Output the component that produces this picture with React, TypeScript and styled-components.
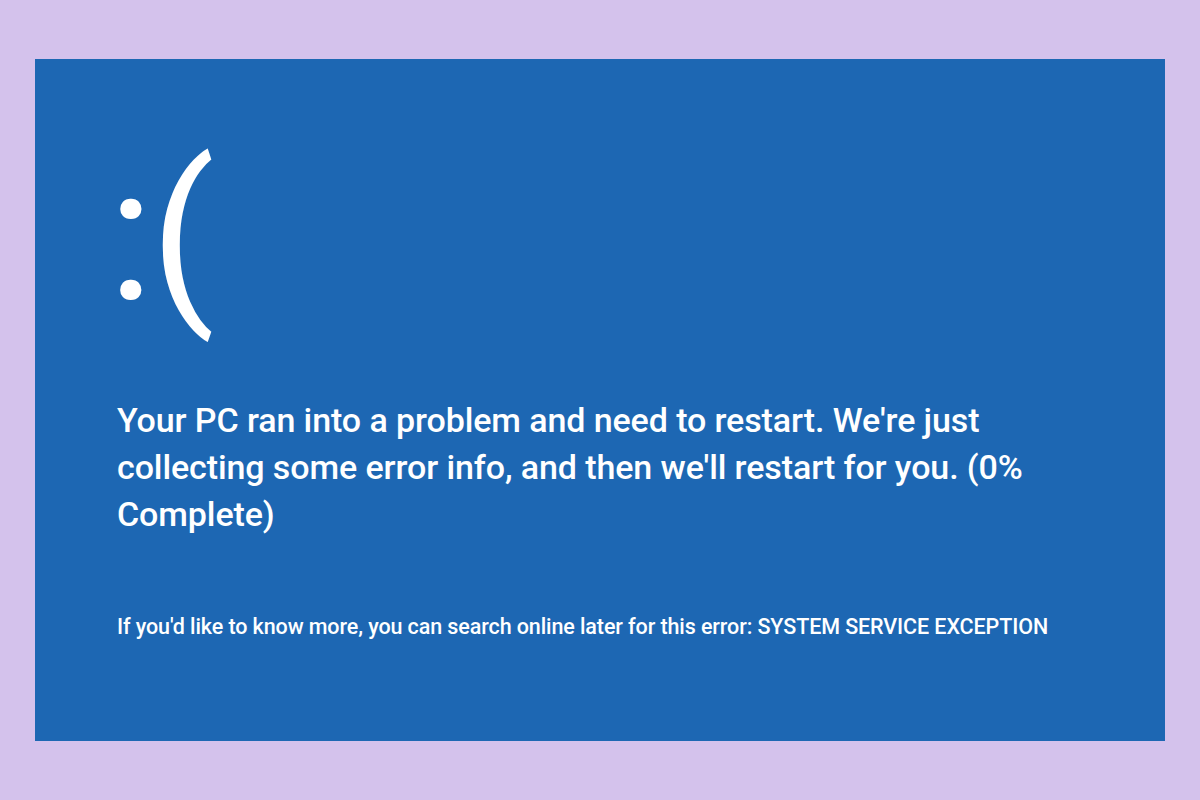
import React, { FC } from 'react';
import styled, { createGlobalStyle } from 'styled-components';

const GlobalStyle = createGlobalStyle`
  html, body {
    margin: 0;
    padding: 0;
    background: #d4c2ec;
  }
  body {
    font-family: Roboto, "Liberation Sans", sans-serif;
  }
`;

const Page = styled.div`
  width: 1200px;
  height: 800px;
  box-sizing: border-box;
  padding: 59px 35px;
`;

const Screen = styled.div`
  height: 682px;
  background: #1d67b3;
  color: #ffffff;
  box-sizing: border-box;
  padding: 82px 0 0 82px;
  display: flex;
  flex-direction: column;
`;

const Face = styled.div`
  margin-left: -9px;
  font-family: Roboto, sans-serif;
  font-weight: 400;
  font-size: 188px;
  line-height: 188px;
  height: 188px;
  letter-spacing: -3px;
`;

const Message = styled.p`
  margin: 68px 0 0;
  font-size: 34px;
  line-height: 47px;
  font-weight: 500;
  letter-spacing: -0.1px;
  max-width: 920px;
`;

const Hint = styled.p`
  margin: 76px 0 0;
  font-size: 21.5px;
  font-weight: 500;
  letter-spacing: -0.1px;
`;

const App: FC = () => (
  <>
    <GlobalStyle />
    <Page>
      <Screen>
        <Face>:(</Face>
        <Message>
          Your PC ran into a problem and need to restart. We're just collecting some error info, and then
          we'll restart for you. (0% Complete)
        </Message>
        <Hint>
          If you'd like to know more, you can search online later for this error: SYSTEM SERVICE EXCEPTION
        </Hint>
      </Screen>
    </Page>
  </>
);

export default App;
